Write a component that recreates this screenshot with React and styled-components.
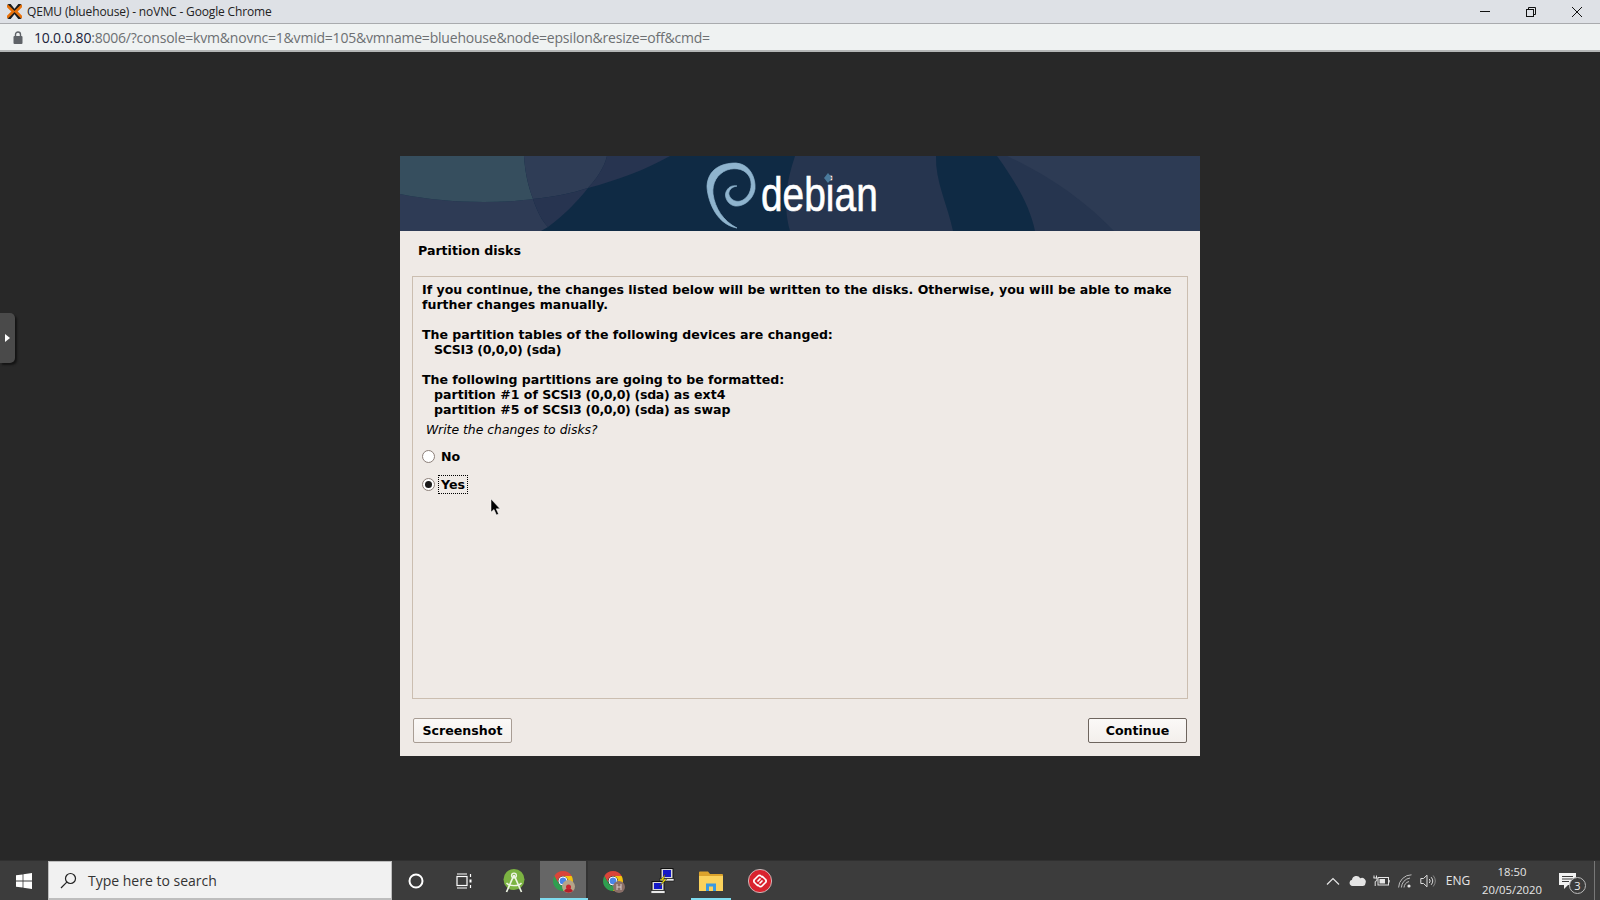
import React from 'react';
import styled, { createGlobalStyle } from 'styled-components';

const Global = createGlobalStyle`
  html, body { margin: 0; padding: 0; background: #282828; overflow: hidden; }
  * { box-sizing: border-box; }
`;

const Page = styled.div`
  width: 1600px;
  height: 900px;
  display: flex;
  flex-direction: column;
  font-family: "Open Sans", "Noto Sans", sans-serif;
`;

const TitleBar = styled.div`
  height: 24px;
  flex: none;
  display: flex;
  align-items: center;
  padding-left: 7px;
  background: #dee1e6;
  border-bottom: 1px solid #a9abae;
`;

const WindowTitle = styled.span`
  margin-left: 5px;
  font-size: 12px;
  color: #222;
  flex: 1;
  letter-spacing: -0.15px;
`;

const WindowButton = styled.div`
  width: 46px;
  height: 23px;
  display: flex;
  align-items: center;
  justify-content: center;
  svg { display: block; }
`;

const AddressBar = styled.div`
  height: 28px;
  flex: none;
  display: flex;
  align-items: center;
  padding-left: 13px;
  background: #eff2f2;
  border-bottom: 2px solid #b4b6b6;
`;

const Url = styled.span`
  margin-left: 11px;
  font-size: 14px;
  letter-spacing: -0.21px;
  color: #6d7073;
  b { font-weight: 400; color: #20233a; }
`;

const Screen = styled.main`
  flex: 1;
  position: relative;
  background: #282828;
  display: flex;
  flex-direction: column;
  align-items: center;
  padding-top: 104px;
`;

const SideHandle = styled.div`
  position: absolute;
  left: 0;
  top: 261px;
  width: 15px;
  height: 50px;
  background: #4a4a4a;
  border-radius: 0 5px 5px 0;
  box-shadow: 2px 2px 2px #141414;
  display: flex;
  align-items: center;
  padding-left: 5px;
  &::after {
    content: '';
    border-left: 5px solid #fff;
    border-top: 4px solid transparent;
    border-bottom: 4px solid transparent;
  }
`;

const Installer = styled.section`
  width: 800px;
  height: 600px;
  background: #efeae6;
  display: flex;
  flex-direction: column;
  font-family: "DejaVu Sans", sans-serif;
  color: #000;
`;

const Banner = styled.header`
  position: relative;
  height: 75px;
  flex: none;
  background: #0f2a44;
  overflow: hidden;
`;

const BannerArt = styled.svg`
  position: absolute;
  inset: 0;
  display: block;
`;

const Wordmark = styled.div`
  position: absolute;
  left: 361px;
  top: 11px;
  font-family: "Liberation Sans", sans-serif;
  font-size: 48px;
  line-height: 56px;
  color: #fff;
  -webkit-text-stroke: 0.6px #fff;
  transform: scaleX(0.81);
  transform-origin: 0 0;
`;

const IDot = styled.svg`
  position: absolute;
  left: 424px;
  top: 17px;
`;

const Heading = styled.h1`
  margin: 0;
  padding: 12px 0 0 18px;
  height: 45px;
  flex: none;
  font-size: 12.6px;
  line-height: 15px;
  font-weight: 700;
`;

const Panel = styled.div`
  margin: 0 12px;
  height: 423px;
  flex: none;
  border: 1px solid #cbbeb0;
  padding: 5px 9px;
`;

const Line = styled.div`
  min-height: 15px;
  font-size: 12.56px;
  line-height: 15px;
  font-weight: 700;
  white-space: pre;
  padding-left: ${p => (p.$indent ? '12px' : '0')};
`;

const Device = styled.span`
  letter-spacing: -0.32px;
`;

const Question = styled.div`
  margin-top: 5px;
  padding-left: 4px;
  font-size: 12.4px;
  line-height: 15px;
  font-style: italic;
`;

const Choices = styled.div`
  margin-top: 10px;
  display: flex;
  flex-direction: column;
  gap: 9px;
`;

const Choice = styled.div`
  height: 19px;
  display: flex;
  align-items: center;
`;

const Radio = styled.span`
  width: 13px;
  height: 13px;
  flex: none;
  border-radius: 50%;
  border: 1px solid #8c7f79;
  background: #fff;
  display: flex;
  align-items: center;
  justify-content: center;
  &::after {
    content: '';
    width: 7px;
    height: 7px;
    border-radius: 50%;
    background: ${p => (p.$checked ? '#1a1a1a' : 'transparent')};
  }
`;

const ChoiceLabel = styled.span`
  margin-left: 3px;
  padding: 0 2px;
  height: 19px;
  font-size: 12.6px;
  line-height: 17px;
  font-weight: 700;
  border: 1px dotted ${p => (p.$focused ? '#000' : 'transparent')};
`;

const Actions = styled.footer`
  margin: 19px 13px 0;
  display: flex;
  justify-content: space-between;
`;

const Button = styled.div`
  height: 25px;
  width: ${p => p.$width}px;
  display: flex;
  align-items: center;
  justify-content: center;
  font-size: 12.6px;
  font-weight: 700;
  background: linear-gradient(#fbf9f7, #f3efec);
  border: 1px solid ${p => (p.$default ? '#6e655e' : '#a89d94')};
  border-radius: 2px;
`;

const Cursor = styled.svg`
  position: absolute;
  left: 490px;
  top: 446px;
`;

const Taskbar = styled.footer`
  height: 40px;
  flex: none;
  display: flex;
  align-items: stretch;
  background: #3c3c3c;
  border-top: 1px solid #303030;
`;

const StartButton = styled.div`
  width: 48px;
  display: flex;
  align-items: center;
  justify-content: center;
`;

const SearchBox = styled.div`
  width: 344px;
  display: flex;
  align-items: center;
  padding-left: 11px;
  background: #f1f1f1;
  border: 1px solid #bdbdbd;
  border-bottom-width: 2px;
`;

const SearchText = styled.span`
  margin-left: 11px;
  font-size: 14px;
  color: #333;
`;

const TaskItem = styled.div`
  width: ${p => p.$w || 48}px;
  position: relative;
  display: flex;
  align-items: center;
  justify-content: center;
  background: ${p => (p.$active ? '#666' : 'transparent')};
  border-right: ${p => (p.$active ? '2px solid #333' : 'none')};
  &::after {
    content: '';
    position: absolute;
    bottom: 0;
    left: ${p => (p.$active ? '0' : '4px')};
    right: ${p => (p.$active ? '-2px' : '4px')};
    height: 2px;
    background: ${p => (p.$open ? '#7fdcf0' : 'transparent')};
  }
`;

const Tray = styled.div`
  margin-left: auto;
  display: flex;
  align-items: center;
  color: #e6e6e6;
`;

const TraySlot = styled.div`
  width: ${p => p.$w}px;
  height: 100%;
  display: flex;
  align-items: center;
  justify-content: center;
`;

const Lang = styled.span`
  font-size: 12px;
`;

const Clock = styled.div`
  width: 70px;
  text-align: center;
  font-size: 11.3px;
  line-height: 18px;
`;

const ShowDesktop = styled.div`
  width: 6px;
  height: 100%;
  margin-left: 7px;
  border-left: 1px solid #777;
`;

const Badge = styled.span`
  position: absolute;
  left: 22px;
  top: 16px;
  width: 17px;
  height: 17px;
  border-radius: 50%;
  border: 1px solid #bbb;
  background: #3c3c3c;
  color: #eee;
  font-size: 11px;
  line-height: 15px;
  text-align: center;
`;

const NotifySlot = styled(TraySlot)`
  position: relative;
`;

const ProxmoxLogo = () => (
  <svg width="15" height="15" viewBox="0 0 15 15">
    <path d="M1.5 0L13.5 15M13.5 0L1.5 15" stroke="#1c1c1c" strokeWidth="3.4" />
    <path d="M0 1.5L6.2 7.5L0 13.5M15 1.5L8.8 7.5L15 13.5" fill="none" stroke="#e8710a" strokeWidth="2.6" />
  </svg>
);

const Lock = () => (
  <svg width="10" height="13" viewBox="0 0 10 13">
    <rect x="0.5" y="5" width="9" height="8" rx="1" fill="#5f6368" />
    <path d="M2.5 5.5V3.5a2.5 2.5 0 0 1 5 0v2" fill="none" stroke="#5f6368" strokeWidth="1.4" />
  </svg>
);

const BannerShapes = () => (
  <BannerArt width="800" height="75" viewBox="0 0 800 75">
    <path d="M0 38C45 47 95 48 133 43C137 55 142 65 148 71L141 75H0Z" fill="#2e3b55" />
    <path d="M0 0H124C125 16 128 30 133 43C95 48 45 47 0 38Z" fill="#364e5e" />
    <path d="M124 0H207C204 12 197 22 188 32C170 38 152 41 133 43C128 30 125 16 124 0Z" fill="#2f3d56" />
    <path d="M207 0H270C245 14 218 24 188 32C197 22 204 12 207 0Z" fill="#273450" />
    <path d="M133 43C152 41 170 38 188 32C177 46 163 60 148 71C142 65 137 55 133 43Z" fill="#273450" />
    <path d="M395 0C388 22 382 45 390 75H553C548 50 535 25 536 0Z" fill="#26354f" />
    <path d="M597 0H800V75H635C630 50 615 25 597 0Z" fill="#26354f" />
    <path d="M607 0H800V75H714C685 45 650 20 607 0Z" fill="#2d3b54" />
    <path d="M337 72C314 68 307 40 307 30C308 14 320 7 336 7C350 8 356 22 355 33C353 45 342 51 335 50C328 49 324 41 326 36C328 31 332 29 337 30C331 31 328 35 329 39C331 45 338 47 343 44C350 40 353 30 350 22C346 13 336 11 327 14C317 18 312 27 313 38C315 52 323 65 337 72Z" fill="#8fb4ce" stroke="#8fb4ce" strokeWidth="0.7" />
  </BannerArt>
);

const WindowsLogo = () => (
  <svg width="16" height="16" viewBox="0 0 16 16" fill="#fff">
    <path d="M0 2.3L6.6 1.4V7.6H0ZM7.4 1.3L16 0V7.6H7.4ZM0 8.4H6.6V14.6L0 13.7ZM7.4 8.4H16V16L7.4 14.7Z" />
  </svg>
);

const SearchIcon = () => (
  <svg width="17" height="17" viewBox="0 0 17 17" fill="none" stroke="#222" strokeWidth="1.2">
    <circle cx="10.5" cy="6.5" r="5" />
    <path d="M6.8 10.2L1 16" />
  </svg>
);

const TaskView = () => (
  <svg width="16" height="16" viewBox="0 0 16 16" fill="none" stroke="#fff" strokeWidth="1.2">
    <path d="M1 1h10M1 15h10" />
    <rect x="1" y="3.5" width="10" height="9" />
    <path d="M14.5 1v3M14.5 12v3" />
    <path d="M13.5 6.5h2v3h-2z" fill="#fff" stroke="none" />
  </svg>
);

const AndroidStudio = () => (
  <svg width="22" height="24" viewBox="0 0 22 24">
    <circle cx="11" cy="10.5" r="10.5" fill="#7cb342" />
    <path d="M11 6L3.5 23M11 6L18.5 23" stroke="#eef5e4" strokeWidth="1.7" fill="none" />
    <circle cx="11" cy="6.5" r="2.4" fill="none" stroke="#eef5e4" strokeWidth="1.4" />
    <path d="M3.5 14C6 17.5 16 17.5 18.5 14" stroke="#eef5e4" strokeWidth="1.3" fill="none" />
  </svg>
);

const ChromeIcon = ({ avatar }) => (
  <svg width="26" height="26" viewBox="-2 -2 26 26">
    <path d="M2.34 6A10 10 0 0 1 19.66 6L11 6A5 5 0 0 0 6.67 13.5Z" fill="#d9453a" />
    <path d="M2.34 6L6.67 13.5A5 5 0 0 0 15.33 13.5L11 21A10 10 0 0 1 2.34 6Z" fill="#2f9e4f" />
    <path d="M19.66 6A10 10 0 0 1 11 21L15.33 13.5A5 5 0 0 0 11 6Z" fill="#f4c20d" />
    <circle cx="11" cy="11" r="4" fill="#4a86e8" stroke="#fff" strokeWidth="1" />
    {avatar === 'photo' ? (
      <>
        <circle cx="16.5" cy="16.5" r="6.5" fill="#b5a489" />
        <path d="M12 21a5 5 0 0 1 9 0a6.5 6.5 0 0 1-9 0Z" fill="#b3202a" />
        <circle cx="16.5" cy="17" r="2.5" fill="#c9242f" />
      </>
    ) : (
      <>
        <circle cx="17" cy="17" r="6" fill="#8a6f68" />
        <path d="M15 14v6M19 14v6M15 17h4" stroke="#d9ccc8" strokeWidth="1" />
      </>
    )}
  </svg>
);

const PuttyIcon = () => (
  <svg width="24" height="26" viewBox="0 0 24 26">
    <rect x="10" y="0.5" width="12" height="10" fill="#d8d8d8" stroke="#111" />
    <rect x="12" y="2" width="8" height="7" fill="#1419c8" />
    <rect x="9" y="10.5" width="14" height="2.5" fill="#e8e8e8" stroke="#111" strokeWidth="0.6" />
    <rect x="1" y="13.5" width="12" height="9" fill="#d8d8d8" stroke="#111" />
    <rect x="3" y="15" width="8" height="6" fill="#1419c8" />
    <rect x="0" y="22.5" width="14" height="3" fill="#e8e8e8" stroke="#111" strokeWidth="0.6" />
    <path d="M14.5 6L9 12.5L12.5 12L8.5 18.5L16 11L12.5 11.5Z" fill="#f5e400" stroke="#222" strokeWidth="0.4" />
  </svg>
);

const FolderIcon = () => (
  <svg width="24" height="20" viewBox="0 0 24 20">
    <path d="M0 1.5A1 1 0 0 1 1 .5H9L11 3H23A1 1 0 0 1 24 4V19a1 1 0 0 1-1 1H1a1 1 0 0 1-1-1Z" fill="#dca32c" />
    <rect x="0" y="5" width="24" height="15" fill="#fbd25c" />
    <path d="M7 20V12.5H17V20H14V15.5H10V20Z" fill="#3b9ae0" />
  </svg>
);

const AuthyIcon = () => (
  <svg width="24" height="24" viewBox="0 0 24 24">
    <circle cx="12" cy="12" r="11.6" fill="#d9232e" stroke="#d8d8d8" strokeWidth="0.8" />
    <path d="M9.5 16.5L6.5 13.5a2 2 0 0 1 0-3L10 7a2 2 0 0 1 3 0l1 1M14.5 7.5L17.5 10.5a2 2 0 0 1 0 3L14 17a2 2 0 0 1-3 0l-1-1" fill="none" stroke="#fff" strokeWidth="1.7" strokeLinecap="round" />
    <path d="M10 12l2-2M12 14l2-2" fill="none" stroke="#fff" strokeWidth="1.7" strokeLinecap="round" />
  </svg>
);

const Chevron = () => (
  <svg width="14" height="8" viewBox="0 0 14 8" fill="none" stroke="#e6e6e6" strokeWidth="1.2">
    <path d="M1 7.5L7 1.5L13 7.5" />
  </svg>
);

const Cloud = () => (
  <svg width="17" height="11" viewBox="0 0 17 11">
    <path d="M3.5 11A3.2 3.2 0 0 1 3 4.7A4.4 4.4 0 0 1 11.2 3.2A3.9 3.9 0 0 1 16.5 8.2A2.8 2.8 0 0 1 14 11Z" fill="#e4e4e4" />
  </svg>
);

const Battery = () => (
  <svg width="17" height="12" viewBox="0 0 17 12" fill="none" stroke="#e6e6e6">
    <rect x="5" y="2.5" width="10.5" height="7.5" />
    <rect x="6.5" y="4" width="5.5" height="4.5" fill="#e6e6e6" stroke="none" />
    <path d="M15.5 5h1.2v2.5h-1.2z" fill="#e6e6e6" stroke="none" />
    <path d="M1 0.5V3M3.5 .5V3M.5 3h3.5v2.5L2.2 6.5V11" strokeWidth="1" />
  </svg>
);

const Wifi = () => (
  <svg width="14" height="14" viewBox="0 0 14 14" fill="none" stroke="#bbb" strokeWidth="1">
    <path d="M.6 13.5A13 13 0 0 1 13.5 .8M3.4 13.5A10 10 0 0 1 12 4M6 13.5A7 7 0 0 1 11 7.5" />
    <circle cx="11" cy="12" r="1.6" fill="#e6e6e6" stroke="none" />
  </svg>
);

const Speaker = () => (
  <svg width="16" height="14" viewBox="0 0 16 14" fill="none" stroke="#ddd" strokeWidth="1">
    <path d="M.8 4.5H3.5L7 1.2V12.8L3.5 9.5H.8Z" />
    <path d="M9.3 5A3 3 0 0 1 9.3 9M11.2 3.2A6 6 0 0 1 11.2 10.8" />
    <path d="M13.2 1.5A9 9 0 0 1 13.2 12.5" stroke="#888" />
  </svg>
);

const Bubble = () => (
  <svg width="17" height="16" viewBox="0 0 17 16">
    <path d="M0 0H17V12H9L5 16V12H0Z" fill="#f2f2f2" />
    <path d="M3 3.5H14M3 6H14M3 8.5H10" stroke="#3c3c3c" strokeWidth="1" />
  </svg>
);

export default function App() {
  return (
    <Page>
      <Global />
      <TitleBar>
        <ProxmoxLogo />
        <WindowTitle>QEMU (bluehouse) - noVNC - Google Chrome</WindowTitle>
        <WindowButton>
          <svg width="10" height="1"><path d="M0 .5H10" stroke="#111" /></svg>
        </WindowButton>
        <WindowButton>
          <svg width="10" height="10" fill="none" stroke="#111">
            <rect x=".5" y="2.5" width="7" height="7" />
            <path d="M2.5 2.5V.5H9.5V7.5H7.5" />
          </svg>
        </WindowButton>
        <WindowButton>
          <svg width="10" height="10" stroke="#111"><path d="M0 0L10 10M10 0L0 10" /></svg>
        </WindowButton>
      </TitleBar>
      <AddressBar>
        <Lock />
        <Url><b>10.0.0.80</b>:8006/?console=kvm&amp;novnc=1&amp;vmid=105&amp;vmname=bluehouse&amp;node=epsilon&amp;resize=off&amp;cmd=</Url>
      </AddressBar>
      <Screen>
        <SideHandle />
        <Installer>
          <Banner>
            <BannerShapes />
            <Wordmark>debian</Wordmark>
            <IDot width="8" height="10" viewBox="0 0 8 10">
              <path d="M4 0L8 5L4 10L0 5Z" fill="#4a7a9c" />
            </IDot>
          </Banner>
          <Heading>Partition disks</Heading>
          <Panel>
            <Line>If you continue, the changes listed below will be written to the disks. Otherwise, you will be able to make</Line>
            <Line>further changes manually.</Line>
            <Line />
            <Line>The partition tables of the following devices are changed:</Line>
            <Line $indent><Device>SCSI3 (0,0,0) (sda)</Device></Line>
            <Line />
            <Line>The following partitions are going to be formatted:</Line>
            <Line $indent>partition #1 of <Device>SCSI3 (0,0,0) (sda)</Device> as ext4</Line>
            <Line $indent>partition #5 of <Device>SCSI3 (0,0,0) (sda)</Device> as swap</Line>
            <Question>Write the changes to disks?</Question>
            <Choices>
              <Choice>
                <Radio />
                <ChoiceLabel>No</ChoiceLabel>
              </Choice>
              <Choice>
                <Radio $checked />
                <ChoiceLabel $focused>Yes</ChoiceLabel>
              </Choice>
            </Choices>
          </Panel>
          <Actions>
            <Button $width={99}>Screenshot</Button>
            <Button $width={99} $default>Continue</Button>
          </Actions>
        </Installer>
        <Cursor width="12" height="18" viewBox="0 0 12 18">
          <path d="M1 1V14L4 11.5L6.5 17L8.5 16L6.2 10.8H10Z" fill="#000" stroke="#fff" strokeWidth="0.5" />
        </Cursor>
      </Screen>
      <Taskbar>
        <StartButton><WindowsLogo /></StartButton>
        <SearchBox>
          <SearchIcon />
          <SearchText>Type here to search</SearchText>
        </SearchBox>
        <TaskItem>
          <svg width="16" height="16" fill="none" stroke="#fff" strokeWidth="2"><circle cx="8" cy="8" r="6.5" /></svg>
        </TaskItem>
        <TaskItem><TaskView /></TaskItem>
        <TaskItem $w={52}><AndroidStudio /></TaskItem>
        <TaskItem $active $open><ChromeIcon avatar="photo" /></TaskItem>
        <TaskItem $w={50}><ChromeIcon avatar="letter" /></TaskItem>
        <TaskItem $w={49}><PuttyIcon /></TaskItem>
        <TaskItem $open><FolderIcon /></TaskItem>
        <TaskItem $w={49}><AuthyIcon /></TaskItem>
        <Tray>
          <TraySlot $w={24}><Chevron /></TraySlot>
          <TraySlot $w={24}><Cloud /></TraySlot>
          <TraySlot $w={24}><Battery /></TraySlot>
          <TraySlot $w={24}><Wifi /></TraySlot>
          <TraySlot $w={22}><Speaker /></TraySlot>
          <TraySlot $w={38}><Lang>ENG</Lang></TraySlot>
          <Clock>
            <div>18:50</div>
            <div>20/05/2020</div>
          </Clock>
          <NotifySlot $w={40}>
            <Bubble />
            <Badge>3</Badge>
          </NotifySlot>
          <ShowDesktop />
        </Tray>
      </Taskbar>
    </Page>
  );
}
